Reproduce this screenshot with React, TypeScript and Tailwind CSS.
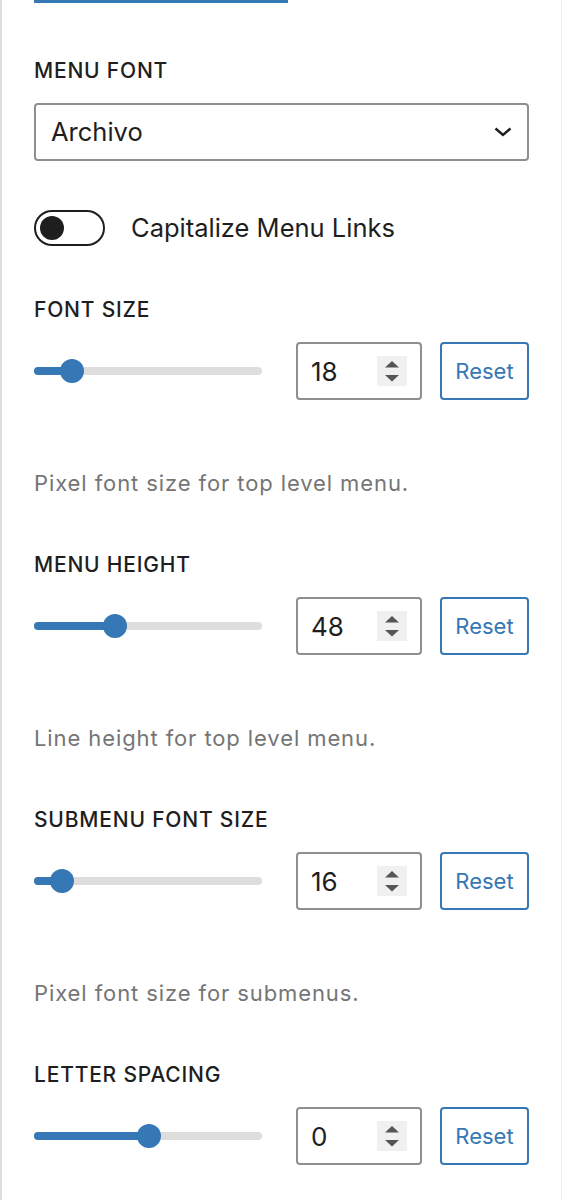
import React from "react";

type SliderSetting = {
  label: string;
  value: number;
  pos: number; // thumb centre, percent of the track
  help?: string;
};

const sliders: SliderSetting[] = [
  { label: "Font Size", value: 18, pos: 16.7, help: "Pixel font size for top level menu." },
  { label: "Menu Height", value: 48, pos: 35.5, help: "Line height for top level menu." },
  { label: "Submenu Font Size", value: 16, pos: 12.3, help: "Pixel font size for submenus." },
  { label: "Letter Spacing", value: 0, pos: 50.4 },
];

function Label({ children }: { children: React.ReactNode }) {
  return (
    <div className="text-[21px] leading-[28px] font-medium uppercase tracking-[0.8px] text-[#1e1e1e]">{children}</div>
  );
}

function Spinner() {
  return (
    <span className="flex h-[30px] w-[30px] items-center justify-center bg-[#f0f0f0]">
      <svg width="14" height="21" viewBox="0 0 14 21" fill="#555555">
        <polygon points="7,0 14,6.5 0,6.5" />
        <polygon points="0,14 14,14 7,20.5" />
      </svg>
    </span>
  );
}

function SliderRow({ s, first }: { s: SliderSetting; first: boolean }) {
  return (
    <div className={first ? "mt-[50px]" : "mt-[54px]"}>
      <Label>{s.label}</Label>
      <div className="mt-[18px] flex h-[58px] items-center">
        <div className="relative h-2 flex-1 rounded-full bg-[#dddddd]">
          <div className="absolute left-0 top-0 h-2 rounded-full bg-[#3677b5]" style={{ width: `${s.pos}%` }} />
          <div
            className="absolute top-1/2 h-6 w-6 -translate-x-1/2 -translate-y-1/2 rounded-full bg-[#3677b5]"
            style={{ left: `${s.pos}%` }}
          />
        </div>
        <div className="ml-[34px] flex h-[58px] w-[126px] items-center justify-between rounded-[4px] border-2 border-[#8f8f8f] pl-[13px] pr-[13px]">
          <span className="text-[26px] text-[#1e1e1e]">{s.value}</span>
          <Spinner />
        </div>
        <button className="ml-[18px] flex h-[58px] w-[89px] items-center justify-center rounded-[4px] border-2 border-[#3677b5] text-[22px] text-[#3677b5]">
          Reset
        </button>
      </div>
      {s.help && (
        <p className="mt-[69px] text-[22px] leading-[28px] tracking-[0.9px] text-[#757575]">{s.help}</p>
      )}
    </div>
  );
}

export default function App() {
  return (
    <div className="h-screen overflow-hidden bg-white">
      <div className="min-h-full border-l-2 border-r border-l-[#dedede] border-r-[#f0f0f0] px-8 font-['Inter',sans-serif]">
        <div className="h-[3px] w-[254px] bg-[#3677b5]" />

        <div className="mt-[54px]">
          <Label>Menu Font</Label>
          <div className="mt-[18px] flex h-[58px] items-center justify-between rounded-[4px] border-2 border-[#8f8f8f] pl-[15px] pr-[15px]">
            <span className="text-[25.5px] text-[#1e1e1e]">Archivo</span>
            <svg width="18" height="10" viewBox="0 0 18 10" fill="none" stroke="#1e1e1e" strokeWidth="2.4">
              <path d="M1.5 1.5 L9 8 L16.5 1.5" />
            </svg>
          </div>
        </div>

        <div className="mt-[49px] flex h-9 items-center">
          <div className="flex h-9 w-[71px] items-center rounded-full border-2 border-[#1e1e1e] pl-1">
            <div className="h-6 w-6 rounded-full bg-[#1e1e1e]" />
          </div>
          <span className="ml-[26px] text-[25.5px] text-[#1e1e1e]">Capitalize Menu Links</span>
        </div>

        {sliders.map((s, i) => (
          <SliderRow key={s.label} s={s} first={i === 0} />
        ))}
      </div>
    </div>
  );
}
